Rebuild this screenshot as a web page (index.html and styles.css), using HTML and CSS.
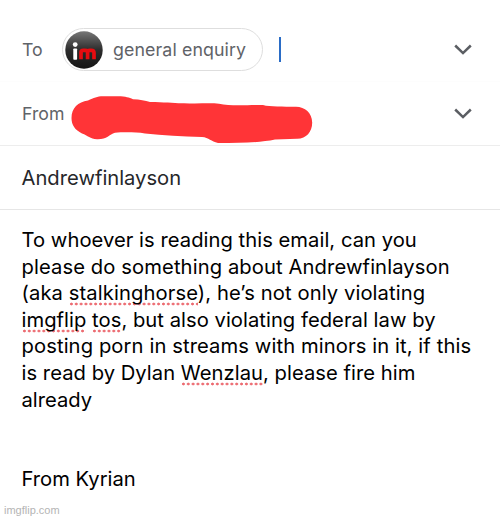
FILE: index.html
```html
<!DOCTYPE html>
<html lang="en">
<head>
    <meta charset="UTF-8">
    <meta name="viewport" content="width=device-width, initial-scale=1.0">
    <title>Compose</title>
    <link rel="stylesheet" href="styles.css">
</head>
<body>

    <!-- Recipient -->
    <div class="row to-row">
        <span class="label">To</span>
        <div class="chip">
            <svg class="avatar" width="38" height="38" viewBox="0 0 38 38">
                <defs>
                    <linearGradient id="shade" x1="0" y1="0" x2="0" y2="1">
                        <stop offset="0" stop-color="#777"/>
                        <stop offset="0.5" stop-color="#2c2c2c"/>
                        <stop offset="1" stop-color="#151515"/>
                    </linearGradient>
                </defs>
                <circle cx="19" cy="19" r="18.7" fill="url(#shade)"/>
                <circle cx="10.2" cy="13.6" r="2.4" fill="#fff"/>
                <rect x="8.3" y="17.5" width="3.8" height="11.3" rx="0.8" fill="#fff"/>
                <path d="M16 28.3V21.5Q16 19.3 18.3 19.3H20.3Q22.6 19.3 22.6 21.5V28.3M22.6 21.5Q22.6 19.3 24.8 19.3H26.3Q29 19.3 29 21.8V28.3" fill="none" stroke="#e80c10" stroke-width="3.7"/>
            </svg>
            <span class="chip-name">general enquiry</span>
        </div>
        <span class="caret"></span>
        <svg class="chevron" width="18" height="12" viewBox="0 0 18 12"><path d="M1.2 1.5L9 9.1L16.8 1.5" fill="none" stroke="#5b5e63" stroke-width="2.5"/></svg>
    </div>

    <!-- Sender, address crossed out -->
    <div class="row from-row">
        <span class="label">From</span>
        <svg class="scribble" width="244" height="50" viewBox="70 95 244 50">
            <path d="M71.5 118C71.5 108 78 102 88 100.5C94 98 97 96.3 103 96.3H118C126 96.5 129 97.5 133 99.2C140 99.5 145 100.5 150 102C165 102 174 103.4 184 103.2C198 104 210 102.7 219 103.8C232 106.5 252 104.5 263 105C270 107 283 106.4 296 106.8C305 107 312 113 312.2 122.5C312.2 132 306 139 297 138.8L275 139.5C261 142.5 242 143 218 143C211 141.5 209 137.5 202 137C182 136.5 163 135.5 145 133.5C135 132 123 132.3 115 132.7C109 134.5 107 139.5 97 139.2C90 139 88 135.5 82 133.5C75 130 71.5 125 71.5 118Z" fill="#ff3437"/>
        </svg>
        <svg class="chevron" width="18" height="12" viewBox="0 0 18 12"><path d="M1.2 1.5L9 9.1L16.8 1.5" fill="none" stroke="#5b5e63" stroke-width="2.5"/></svg>
    </div>

    <div class="subject">Andrewfinlayson</div>

    <!-- Message -->
    <div class="message">
        <span class="mid">To whoever is reading this email, can you</span><br>
        <span class="wide">please do something about Andrewfinlayson</span><br>
        <span class="wide">(aka <u>stalkinghorse</u>), he’s not only violating</span><br>
        <span class="mid"><u>imgflip</u> <u>tos</u>, but also violating federal law by</span><br>
        <span class="wide">posting porn in streams with minors in it, if this</span><br>
        <span class="mid">is read by Dylan <u>Wenzlau</u>, please fire him</span><br>
        already<br>
        <br>
        <br>
        From Kyrian
    </div>

    <div class="watermark">imgflip.com</div>

</body>
</html>
```
FILE: styles.css
```css
* {
    box-sizing: border-box;
}

body {
    margin: 0;
    height: 519px;
    overflow: hidden;
    background: #fff;
    color: #000;
    font-family: Inter, "Liberation Sans", sans-serif;
    position: relative;
}

.row {
    display: flex;
    align-items: center;
    padding: 0 28px 0 22px;
}

.to-row {
    height: 82px;
    padding-top: 18px;
    border-bottom: 1px solid #fdfdfd;
}

.from-row {
    height: 64px;
    border-bottom: 1px solid #ededed;
}

.label {
    width: 40px;
    font-size: 17.7px;
    color: #5f6368;
}

.from-row .label {
    width: 48px;
}

.scribble {
    margin-top: 12px;
}

.chip {
    display: flex;
    align-items: center;
    width: 201px;
    height: 43px;
    padding-left: 2px;
    border: 1px solid #dedede;
    border-radius: 22px;
}

.chip-name {
    margin-left: 10px;
    font-size: 17.8px;
    letter-spacing: 0.1px;
    color: #5f6368;
    white-space: nowrap;
}

.caret {
    width: 2px;
    height: 25px;
    margin-left: 16px;
    background: #2a6cc6;
}

.chevron {
    margin-left: auto;
}

.subject {
    height: 64px;
    padding-left: 21.5px;
    border-bottom: 1px solid #e6e6e6;
    font-size: 20.2px;
    line-height: 64px;
    color: #26272a;
}

.message {
    padding: 17px 0 0 21.5px;
    font-size: 20.2px;
    line-height: 26.6px;
    white-space: nowrap;
}

.wide {
    letter-spacing: 0.1px;
}

.mid {
    letter-spacing: 0.04px;
}

/* spelling marks */
.message u {
    padding-bottom: 1px;
    text-decoration: none;
    background: radial-gradient(circle at center, #ec6a70 1px, transparent 1.8px) 0 100% / 4.85px 4px repeat-x;
}

.watermark {
    position: absolute;
    left: 4px;
    bottom: 2px;
    font: 11px/14px "Liberation Sans", sans-serif;
    color: #b4b4b4;
}
```
